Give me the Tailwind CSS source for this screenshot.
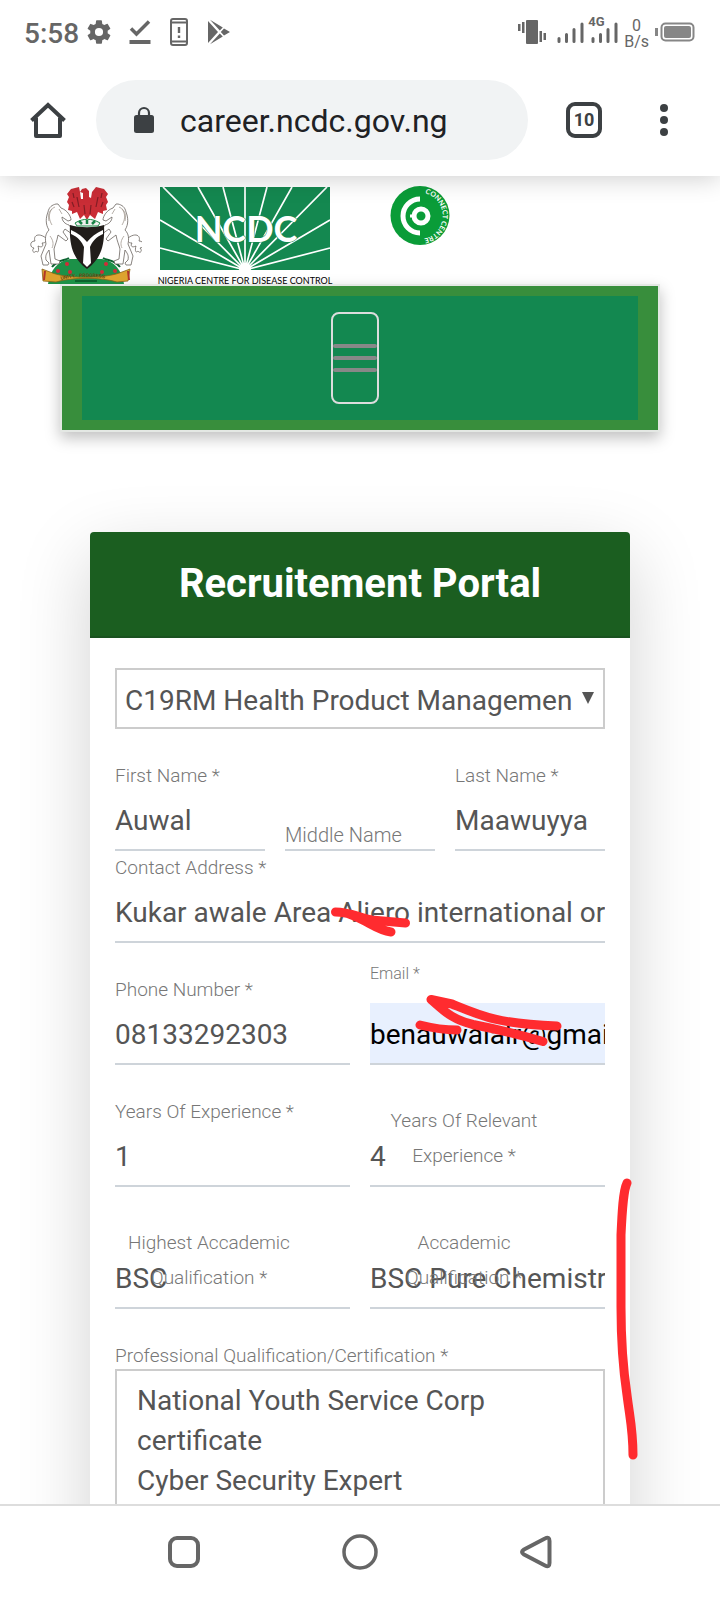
<!DOCTYPE html>
<html lang="en">
<head>
<meta charset="utf-8">
<meta name="viewport" content="width=device-width, initial-scale=1">
<title>Recruitement Portal</title>
<script src="https://cdn.jsdelivr.net/npm/@tailwindcss/browser@4"></script>
</head>
<body class="flex h-screen flex-col overflow-hidden bg-white font-['Roboto',sans-serif] text-[#555]">

<!-- Status bar -->
<div class="relative z-20 flex h-16 shrink-0 items-center justify-between bg-white pl-6 pr-[25px] text-[#666]">
  <div class="flex items-center">
    <span class="pt-1 text-[28px] font-medium leading-8">5:58</span>
    <svg class="ml-1.5 size-7" viewBox="0 0 24 24" fill="currentColor"><path d="M19.4 13a7.500 7.500 0 0 0 0-2l2.100-1.650a.5.5 0 0 0 .12-.64l-2-3.460a.5.5 0 0 0-.61-.22l-2.490 1a7.300 7.300 0 0 0-1.690-.98l-.38-2.650A.49.49 0 0 0 14 2h-4a.49.49 0 0 0-.49.42l-.38 2.650c-.61.25-1.170.59-1.690.98l-2.490-1a.5.5 0 0 0-.61.22l-2 3.460a.49.49 0 0 0 .12.64L4.570 11a7.900 7.900 0 0 0 0 2l-2.110 1.650a.5.5 0 0 0-.12.64l2 3.460c.12.22.39.3.61.22l2.490-1c.52.4 1.080.73 1.690.98l.38 2.650c.03.24.24.42.49.42h4c.25 0 .46-.18.49-.42l.38-2.650c.61-.25 1.170-.59 1.690-.98l2.490 1c.23.09.49 0 .61-.22l2-3.460a.5.5 0 0 0-.12-.64zM12 15.500a3.500 3.500 0 1 1 0-7 3.500 3.500 0 0 1 0 7z"/></svg>
    <svg class="ml-4 h-[26px] w-[22px]" viewBox="0 0 22 26" fill="none" stroke="currentColor"><path d="M2 9.500l5.500 5.500L20 2.500" stroke-width="3.500"/><path d="M.5 23h21" stroke-width="4"/></svg>
    <svg class="ml-[18px] h-7 w-5" viewBox="0 0 20 28" fill="none" stroke="currentColor"><rect x="2" y="1" width="16" height="26" rx="2" stroke-width="2"/><path d="M2 4.500h16M2 23.500h16" stroke-width="2"/><path d="M10 9v6M10 17.500v2.500" stroke-width="2.400"/></svg>
    <svg class="ml-[18px] h-[26px] w-6" viewBox="0 0 24 26" fill="currentColor"><path d="M1 2v22l10-11zM3 .8l9.800 10.700 3-3zM3 25.200l9.800-10.700 3 3zM17 9.500L13.800 13l3.200 3.500L23 13z"/></svg>
  </div>
  <div class="flex items-center">
    <svg class="h-7 w-7" viewBox="0 0 28 28" fill="currentColor"><rect x="8" y="2" width="12" height="24" rx="1"/><path d="M0 6h2.500v7H0zM4 4h2.500v11H4zM21.500 13H24v11h-2.500zM25.500 15H28v7h-2.500z"/></svg>
    <svg class="ml-2.5 h-7 w-7" viewBox="0 0 28 28" fill="none" stroke="currentColor" stroke-width="3" stroke-linecap="round"><path d="M3 20.500v3M10.500 16.500v7M18 11.500v12M26 6v17.500"/></svg>
    <span class="relative ml-1.5 block h-7 w-7">
      <svg class="size-7" viewBox="0 0 28 28" fill="none" stroke="currentColor" stroke-width="3" stroke-linecap="round"><path d="M3 20.500v3M10.500 16.500v7M18 11.500v12M26 6v17.500"/></svg>
      <span class="absolute -left-0.5 -top-0.5 text-[13px] font-bold leading-3">4G</span>
    </span>
    <span class="ml-1.5 flex flex-col pt-1 text-center text-[16px] leading-4"><span>0</span><span>B/s</span></span>
    <svg class="ml-1.5 h-5 w-10" viewBox="0 0 40 20" fill="none" stroke="#868686"><path d="M1.500 6v8" stroke-width="3"/><rect x="6.500" y="1.500" width="32" height="17" rx="4" stroke-width="2"/><rect x="9" y="4" width="27" height="12" rx="2" fill="#868686" stroke="none"/></svg>
  </div>
</div>

<!-- Browser toolbar -->
<header class="relative z-10 flex h-28 shrink-0 items-center bg-white pl-7 pr-10 text-[#3c4043] shadow-[0_2px_24px_rgba(0,0,0,0.2)]">
  <button aria-label="Home" class="size-10"><svg class="size-10" viewBox="0 0 40 40" fill="none" stroke="currentColor" stroke-width="4" stroke-linejoin="round"><path d="M3.500 20.500L20 5l16.500 15.500" stroke-linejoin="miter"/><path d="M8 17.500V36h24V17.500"/></svg></button>
  <div class="ml-7 flex h-20 min-w-0 flex-1 items-center rounded-full bg-[#f1f3f4] pl-[38px]">
    <svg class="h-7 w-5 shrink-0" viewBox="0 0 20 28"><rect y="9" width="20" height="18" rx="2.500" fill="currentColor"/><path d="M5 10V7a5 5 0 0 1 10 0v3" fill="none" stroke="currentColor" stroke-width="2.200"/></svg>
    <input aria-label="Address" value="career.ncdc.gov.ng" class="ml-[26px] min-w-0 flex-1 bg-transparent pt-0.5 text-[32px] leading-10 text-[#202124] outline-none">
  </div>
  <button aria-label="Tabs" class="ml-[38px] flex size-9 shrink-0 items-center justify-center rounded-[9px] border-4 border-[#3c4043] text-[18px] font-bold leading-5">10</button>
  <button aria-label="Menu" class="ml-[54px] w-6 shrink-0"><svg class="h-9 w-6" viewBox="0 0 24 36" fill="currentColor"><circle cx="8" cy="6" r="4"/><circle cx="8" cy="18" r="4"/><circle cx="8" cy="30" r="4"/></svg></button>
</header>

<main class="min-h-0 flex-1 overflow-hidden">
  <!-- Logos -->
  <div class="flex h-[108px] items-start pl-[30px] pt-[9px]">
    <svg class="h-[99px] w-28 shrink-0" viewBox="0 0 112 99" role="img" aria-label="Coat of arms">
      <path d="M18 99c2-14 10-23 22-25h32c12 2 20 11 22 25z" fill="#1c9148"/>
      <path d="M22 82c6-8 12-6 17-9M90 82c-6-8-12-6-17-9M45 96h22" stroke="#0c6330" stroke-width="2" fill="none"/>
      <g fill="#d22b38"><circle cx="28" cy="86" r="2"/><circle cx="37" cy="79" r="2"/><circle cx="40" cy="87" r="2"/><circle cx="72" cy="87" r="2"/><circle cx="76" cy="79" r="2"/><circle cx="85" cy="86" r="2"/></g>
      <g id="horse" fill="#fff" stroke="#6b655f" stroke-width=".8" stroke-linejoin="round">
        <path d="M16 53C8 47 3 51 5 56c-6 0-5 7-1 7-3 3 0 6 2 3 3 3 3-2 2-5 4 2 6 0 4-3 4 0 5-2 4-5z"/>
        <path d="M28 19l3 4c6 2 10 8 10 12l-3 1-6-4c0 4 3 7 7 8l5 7-2 2-7-5-2 3 5 7-2 2-8-6c-1 6-3 10-4 14l1 10 5 2-1 3h-8l-2-14c-2 3-4 5-3 10l3 3-1 2h-5l-2-9 5-12c-1-5-1-10 3-14-4-6-3-13-1-18 1-5 4-7 8-8z"/>
        <path d="M25 22c-7 3-7 9-6 14M22 24c-4 5-3 11 0 16M20 51c3 4 4 8 2 12M29 24l3 5" fill="none" stroke="#a39b92"/>
      </g>
      <use href="#horse" transform="matrix(-1 0 0 1 114 0)"/>
      <path d="M40 40c10 3 24 3 34 0 1 20-3 34-17 44-14-10-18-24-17-44z" fill="#211d1a"/>
      <path d="M41 45c7 3 12 7 16 12 4-5 9-9 16-12v4c-7 3-11 8-13 13l1 16-4 4-4-4 1-16c-2-5-6-10-13-13z" fill="#fff"/>
      <path d="M49 2l-8 2-4 5 2 3-2 5 2 3-1 5 4 1v3l5-2 3 7 4-4 3 5 3-5 5 4 3-7 5 2v-3l4-1-1-5 2-3-2-5 2-3-4-5-8-2-4 5-1 6-2-1V6l-3-3-4 1-2 3 3 1v6h-2l-1-7z" fill="#c92d36"/>
      <path d="M43 8l1 5M42 17l2 5M47 12l2 10M68 12l-2 10M72 8l-1 5M73 17l-2 5M54 20l1 9M61 20l-1 9" stroke="#821d25" stroke-width="1.200" fill="none"/>
      <path d="M45 38c8-5 17-5 25 0l-2 3H47z" fill="#f0f0ee" stroke="#1c8b48"/><path d="M49 36l3 3M57 35v4M65 36l-3 3" stroke="#178346" stroke-width="2.500"/>
      <path d="M12 84l8 3c15 7 56 7 72 0l8-3-2 12-11 1c-17-5-44-5-61 0l-13-1z" fill="#dda32e" stroke="#8a6218" stroke-width=".8"/>
      <path d="M15 86l-1 9M98 86l1 9" stroke="#b23428" stroke-width="2"/>
      <path id="motto" d="M31 95c15-4 36-4 52 0" fill="none"/><text font-family="Roboto" font-size="5" font-weight="700" fill="#6b4a12"><textPath href="#motto">UNITY · PROGRESS</textPath></text>
    </svg>
    <svg class="ml-2 mt-0.5 h-[98px] w-[190px] shrink-0" viewBox="-10 0 190 98" role="img" aria-label="NCDC">
      <rect width="170" height="83" fill="#148850"/>
      <path d="M85 83L0 61M85 83L0 33M85 83L3 0M85 83L38 0M85 83L63 0M85 83V0M85 83L107 0M85 83L132 0M85 83L167 0M85 83l85-50M85 83l85-22" stroke="#fff" stroke-width="1.700"/>
      <circle cx="85" cy="83" r="6" fill="#fff"/><path d="M70 83h30v7H70z" fill="#fff"/>
      <text x="86" y="55" text-anchor="middle" font-family="Lato" font-weight="700" font-size="36" fill="#fff" stroke="#148850" stroke-width="1" paint-order="stroke">NCDC</text>
      <text x="85" y="97" text-anchor="middle" font-family="Lato" font-size="9" fill="#000">NIGERIA CENTRE FOR DISEASE CONTROL</text>
    </svg>
    <svg class="ml-[50px] size-[60px] shrink-0" viewBox="0 0 60 60" role="img" aria-label="Connect Centre">
      <circle cx="30" cy="30.500" r="29.500" fill="#0a9c38"/>
      <path d="M30 14a17 17 0 0 0 0 34" fill="none" stroke="#fff" stroke-width="5"/>
      <path d="M20 31h20" stroke="#fff" stroke-width="3"/>
      <circle cx="31" cy="31" r="7" fill="#0a9c38" stroke="#fff" stroke-width="5"/>
      <path id="ring" d="M35 8.500a23 23 0 0 1 1 44.500" fill="none"/>
      <text font-family="Lato" font-size="7" font-weight="700" fill="#fff"><textPath href="#ring">CONNECT CENTRE</textPath></text>
    </svg>
  </div>

  <!-- Navigation -->
  <nav class="mx-[60px] border-2 border-[#e4e8e4] bg-[#388e3c] px-5 py-2.5 shadow-[0_6px_14px_rgba(0,0,0,0.25)]">
    <div class="flex h-[124px] items-center justify-center bg-[#138850] pr-2.5">
      <button type="button" aria-label="Toggle navigation" class="flex h-[92px] w-12 flex-col items-stretch justify-center gap-2 rounded-lg border-2 border-[#ddd]">
        <span class="h-1 rounded-sm bg-[#888]"></span>
        <span class="h-1 rounded-sm bg-[#888]"></span>
        <span class="h-1 rounded-sm bg-[#888]"></span>
      </button>
    </div>
  </nav>

  <!-- Application form -->
  <form class="relative mx-[90px] mt-[100px] rounded bg-white shadow-[0_24px_72px_rgba(0,0,0,0.18)]">
    <h1 class="flex h-[106px] items-center justify-center rounded-t border-b-2 border-[#1a5220] bg-[#1b5e20] text-[40px] font-bold leading-[48px] text-white">Recruitement Portal</h1>
    <div class="px-[25px] pt-[30px]">
      <div class="relative">
        <select aria-label="Position" class="block h-[61px] w-full appearance-none border-2 border-[#ccc] bg-white pl-2 pr-[30px] pt-1 text-[28px] text-[#555] outline-none"><option>C19RM Health Product Managemen</option></select>
        <svg class="pointer-events-none absolute right-[11px] top-6 h-3 w-3" viewBox="0 0 12 12" fill="#555"><path d="M0 0h12L6 12z"/></svg>
      </div>

      <div class="grid grid-cols-3 gap-5 pt-[30px]">
        <div>
          <label for="first" class="block h-[30px] text-[19px] font-light leading-[34px] text-[#777]">First Name *</label>
          <input id="first" value="Auwal" class="block h-[62px] w-full border-b-2 border-[#ced4da] pt-0.5 text-[28px] outline-none">
        </div>
        <div class="relative pt-[30px]">
          <label for="middle" class="absolute bottom-0 left-0 text-[20px] font-light leading-[32px] text-[#777]">Middle Name</label>
          <input id="middle" class="block h-[62px] w-full border-b-2 border-[#ced4da] pt-0.5 text-[28px] outline-none">
        </div>
        <div>
          <label for="last" class="block h-[30px] text-[19px] font-light leading-[34px] text-[#777]">Last Name *</label>
          <input id="last" value="Maawuyya" class="block h-[62px] w-full border-b-2 border-[#ced4da] pt-0.5 text-[28px] outline-none">
        </div>
      </div>

      <div class="relative">
        <label for="address" class="block h-[30px] text-[19px] font-light leading-[34px] text-[#777]">Contact Address *</label>
        <input id="address" value="Kukar awale Area Aliero international or" class="block h-[62px] w-full border-b-2 border-[#ced4da] pt-0.5 text-[28px] outline-none">
        <svg class="pointer-events-none absolute left-[210px] top-12 h-11 w-[90px]" viewBox="0 0 90 44" fill="none" stroke="#ff2b2f" stroke-width="9" stroke-linecap="round" stroke-linejoin="round"><path d="M10.500 13c14 0 22 5 36 8l34 3M24 15c20 7 27 16 42 18"/></svg>
      </div>

      <div class="grid grid-cols-2 gap-5">
        <div class="pt-[30px]">
          <label for="phone" class="block h-[30px] text-[19px] font-light leading-[34px] text-[#777]">Phone Number *</label>
          <input id="phone" type="tel" value="08133292303" class="block h-[62px] w-full border-b-2 border-[#ced4da] pt-0.5 text-[28px] outline-none">
        </div>
        <div class="relative pt-4">
          <label for="email" class="mb-3.5 block text-[16px] font-light leading-[30px] text-[#777]">Email *</label>
          <input id="email" type="email" value="benauwalalr@gmail.com" class="block h-[62px] w-full border-b-2 border-[#ced4da] bg-[#e8f0fe] pt-0.5 text-[28px] text-black outline-none">
          <svg class="pointer-events-none absolute left-10 top-10 h-[70px] w-[160px]" viewBox="0 0 160 70" fill="none" stroke="#ff2b2f" stroke-width="9" stroke-linecap="round" stroke-linejoin="round"><path d="M10 42c12 3 22 5 37 5M147 43c-60-2-78-11-105-22l-21-4.500c12 10 20 20 42 25 25 5 40 8 70 17"/></svg>
        </div>
      </div>

      <div class="grid grid-cols-2 gap-5">
        <div class="pt-[30px]">
          <label for="years" class="block h-[30px] text-[19px] font-light leading-[34px] text-[#777]">Years Of Experience *</label>
          <input id="years" value="1" class="block h-[62px] w-full border-b-2 border-[#ced4da] pt-0.5 text-[28px] outline-none">
        </div>
        <div class="relative pt-[60px]">
          <label for="relevant" class="absolute left-0 top-[38px] w-4/5 text-center text-[19px] font-light leading-[35px] text-[#777]">Years Of Relevant Experience *</label>
          <input id="relevant" value="4" class="block h-[62px] w-full border-b-2 border-[#ced4da] pt-0.5 text-[28px] outline-none">
        </div>
      </div>

      <div class="grid grid-cols-2 gap-5">
        <div class="relative pt-[60px]">
          <label for="highest" class="absolute left-0 top-[38px] w-4/5 text-center text-[19px] font-light leading-[35px] text-[#777]">Highest Accademic Qualification *</label>
          <input id="highest" value="BSC" class="block h-[62px] w-full border-b-2 border-[#ced4da] pt-0.5 text-[28px] outline-none">
        </div>
        <div class="relative pt-[60px]">
          <label for="academic" class="absolute left-0 top-[38px] w-4/5 text-center text-[19px] font-light leading-[35px] text-[#777]">Accademic Qualification *</label>
          <input id="academic" value="BSC Pure Chemistry" class="block h-[62px] w-full border-b-2 border-[#ced4da] pt-0.5 text-[28px] outline-none">
        </div>
      </div>

      <div class="pt-[30px]">
        <label for="professional" class="block h-[30px] text-[19px] font-light leading-[34px] text-[#777]">Professional Qualification/Certification *</label>
        <textarea id="professional" class="block h-60 w-full resize-none overflow-hidden border-2 border-[#ccc] px-5 py-2.5 text-[28px] leading-10 outline-none">National Youth Service Corp certificate
Cyber Security Expert</textarea>
      </div>
    </div>
    <svg class="pointer-events-none absolute -right-4 top-[638px] h-[300px] w-10" viewBox="0 0 40 300" fill="none" stroke="#ff2b2f" stroke-width="9" stroke-linecap="round" stroke-linejoin="round"><path d="M21 13c-4 8-5 30-6 52v72c0 40 3 68 6 88 3 24 6 35 6 60"/></svg>
  </form>
</main>

<!-- System navigation -->
<footer class="relative z-10 flex h-24 shrink-0 items-center justify-around border-t-2 border-[#ddd] bg-white px-24 pb-0.5 text-[#666]">
  <button aria-label="Recent apps"><svg class="size-9" viewBox="0 0 36 36" fill="none" stroke="currentColor" stroke-width="4"><rect x="4" y="4" width="28" height="28" rx="7"/></svg></button>
  <button aria-label="Home screen"><svg class="size-9" viewBox="0 0 36 36" fill="none" stroke="currentColor" stroke-width="3.500"><circle cx="18" cy="18" r="16"/></svg></button>
  <button aria-label="Back"><svg class="size-9" viewBox="0 0 36 36" fill="none" stroke="currentColor" stroke-width="4" stroke-linejoin="round"><path d="M27 4.500Q31.500 2 31.500 7v22q0 5-4.500 2.500L6 20.500q-4-2.500 0-5z"/></svg></button>
</footer>
</body>
</html>
